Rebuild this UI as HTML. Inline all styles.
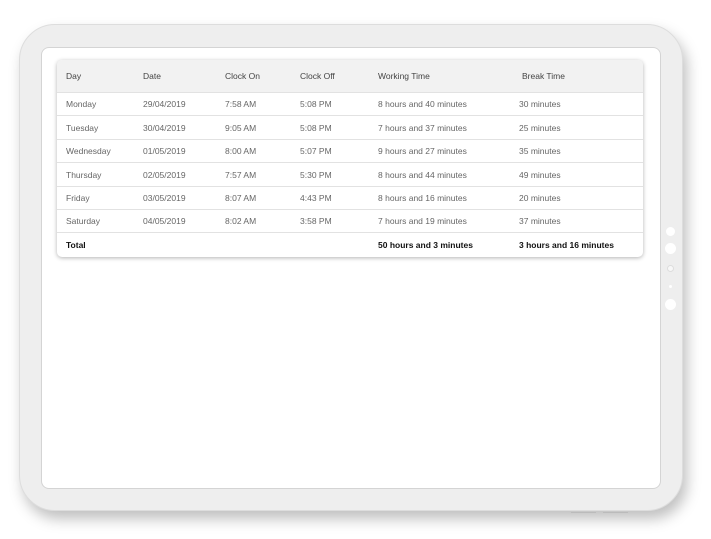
<!DOCTYPE html>
<html><head><style>
body{margin:0;width:711px;height:539px;background:#fff;position:relative;overflow:hidden;font-family:"Liberation Sans",sans-serif}
.tab{position:absolute;left:19px;top:24px;width:664px;height:487px;background:#eee;border-radius:36px;border:1px solid #ddd;box-sizing:border-box;box-shadow:4px 8px 14px rgba(0,0,0,.25)}
.scr{position:absolute;left:41px;top:47px;width:620px;height:442px;background:#fff;border-radius:8px;border:1px solid #d4d4d4;box-sizing:border-box}
.dot{position:absolute;background:#fff;border-radius:50%}
.tbl{position:absolute;left:57px;top:60px;width:586px;height:197px;border-radius:5px;box-shadow:0 1px 4px rgba(0,0,0,.3);background:#fff;overflow:hidden}
.row{position:absolute;left:0;width:586px;height:23px;border-bottom:1px solid #e2e2e2;font-size:8.5px;color:#666}
.row span{position:absolute;top:7px;white-space:nowrap}
.hd{background:#f2f2f2;height:32px;top:0;color:#444}
.hd span{top:11px}
.tot{color:#111;font-weight:bold;border:none}
</style></head><body>
<div class="tab"></div>
<div class="scr"></div>
<div class="dot" style="left:666px;top:227px;width:9px;height:9px"></div>
<div class="dot" style="left:665px;top:243px;width:11px;height:11px"></div>
<div class="dot" style="left:667px;top:265px;width:5px;height:5px;background:#f8f8f8;border:1px solid #ddd"></div>
<div class="dot" style="left:669px;top:285px;width:3px;height:3px"></div>
<div class="dot" style="left:665px;top:299px;width:11px;height:11px"></div>
<div style="position:absolute;left:571px;top:512px;width:25px;height:1px;background:#bbb"></div>
<div style="position:absolute;left:603px;top:512px;width:25px;height:1px;background:#bbb"></div>
<div class="tbl">
<div class="row hd"><span style="left:9px">Day</span><span style="left:86px">Date</span><span style="left:168px">Clock On</span><span style="left:243px">Clock Off</span><span style="left:321px">Working Time</span><span style="left:465px">Break Time</span></div>
<div class="row" style="top:32px"><span style="left:9px">Monday</span><span style="left:86px">29/04/2019</span><span style="left:168px">7:58 AM</span><span style="left:243px">5:08 PM</span><span style="left:321px">8 hours and 40 minutes</span><span style="left:462px">30 minutes</span></div>
<div class="row" style="top:56px"><span style="left:9px">Tuesday</span><span style="left:86px">30/04/2019</span><span style="left:168px">9:05 AM</span><span style="left:243px">5:08 PM</span><span style="left:321px">7 hours and 37 minutes</span><span style="left:462px">25 minutes</span></div>
<div class="row" style="top:79px"><span style="left:9px">Wednesday</span><span style="left:86px">01/05/2019</span><span style="left:168px">8:00 AM</span><span style="left:243px">5:07 PM</span><span style="left:321px">9 hours and 27 minutes</span><span style="left:462px">35 minutes</span></div>
<div class="row" style="top:103px"><span style="left:9px">Thursday</span><span style="left:86px">02/05/2019</span><span style="left:168px">7:57 AM</span><span style="left:243px">5:30 PM</span><span style="left:321px">8 hours and 44 minutes</span><span style="left:462px">49 minutes</span></div>
<div class="row" style="top:126px"><span style="left:9px">Friday</span><span style="left:86px">03/05/2019</span><span style="left:168px">8:07 AM</span><span style="left:243px">4:43 PM</span><span style="left:321px">8 hours and 16 minutes</span><span style="left:462px">20 minutes</span></div>
<div class="row" style="top:149px"><span style="left:9px">Saturday</span><span style="left:86px">04/05/2019</span><span style="left:168px">8:02 AM</span><span style="left:243px">3:58 PM</span><span style="left:321px">7 hours and 19 minutes</span><span style="left:462px">37 minutes</span></div>
<div class="row tot" style="top:173px"><span style="left:9px">Total</span><span style="left:321px">50 hours and 3 minutes</span><span style="left:462px">3 hours and 16 minutes</span></div>
</div>
</body></html>
